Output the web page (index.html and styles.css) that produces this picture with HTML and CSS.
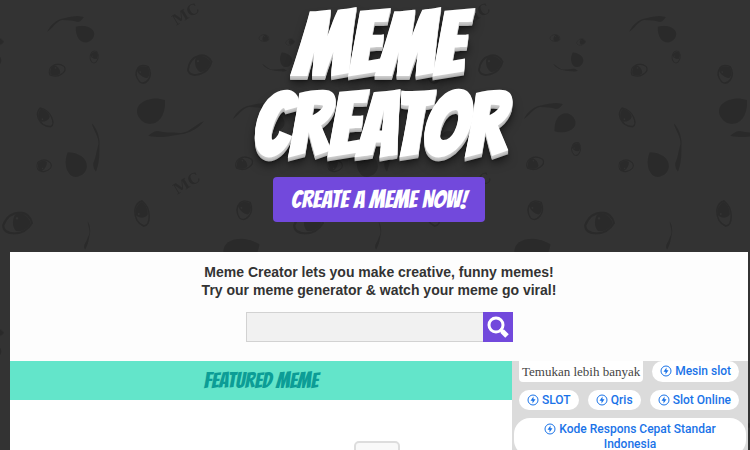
FILE: index.html
```
<!DOCTYPE html>
<html lang="en">
<head>
    <meta charset="UTF-8">
    <meta name="viewport" content="width=device-width, initial-scale=1.0">
    <title>Meme Creator</title>
    <link rel="stylesheet" href="styles.css">
</head>
<body>
    <!-- repeating doodle background -->
    <svg class="doodles" aria-hidden="true">
        <defs>
            <g id="eye">
                <path d="M-12,2 C-9,-6 -4,-9 3,-9 C8,-9 12,-5 13,0 C10,5 5,9 -2,9 C-7,9 -12,8 -12,2Z" fill="none" stroke="#2a2a2a" stroke-width="2"/>
                <path d="M-1,-8 C5,-11 11,-4 12,0 C9,6 3,8 -1,7 C-5,3 -4,-5 -1,-8Z" fill="#2a2a2a"/>
                <circle cx="0" cy="-4" r="1" fill="#333"/>
            </g>
            <path id="nose" d="M14,-11 C6,-14 -6,-13 -12,-6 C-18,2 -10,13 -1,13 C9,13 15,2 14,-11Z" fill="#2a2a2a"/>
            <path id="mouth" d="M0,0 C3,-3 6,-5 10,-5 C18,-3 24,-4 33,-3 C42,-4 48,-12 56,-15 C52,-9 44,-4 36,-2 C26,-1 16,3 0,0Z" fill="#2a2a2a"/>
            <pattern id="faces" width="291" height="291" patternUnits="userSpaceOnUse">
                <use href="#mouth" transform="translate(84 17) rotate(180) scale(.66 1)"/>
                <use href="#nose" transform="translate(85 34) rotate(180) scale(.66 -.66)"/>
                <use href="#eye" transform="translate(94 57) rotate(-65) scale(.48)"/>
                <use href="#eye" transform="translate(57 70) rotate(145) scale(.66 -.66)"/>
                <use href="#eye" transform="translate(143 74) rotate(-55) scale(.7 .85)"/>
                <use href="#eye" transform="translate(199 65) rotate(-15)"/>
                <use href="#nose" transform="translate(151 111)"/>
                <use href="#mouth" transform="translate(148 136)"/>
                <use href="#eye" transform="translate(45 118) rotate(-115) scale(.85 .7)"/>
                <use href="#eye" transform="translate(44 166) rotate(-150) scale(.56 .7)"/>
                <use href="#nose" transform="translate(76 165) rotate(-85) scale(.85)"/>
                <use href="#mouth" transform="translate(96 172) rotate(-80) scale(.85)"/>
                <use href="#eye" transform="translate(142 214) rotate(-90) scale(1 .8)"/>
                <use href="#eye" transform="translate(17 223) scale(1.15)"/>
                <use href="#mouth" transform="translate(85 250) rotate(-70) scale(.5)"/>
                <use href="#eye" transform="translate(264 38) rotate(20) scale(.4)"/>
                <use href="#eye" transform="translate(290 42) scale(.36)"/>
                <use href="#eye" transform="translate(-1 42) scale(.36)"/>
                <use href="#nose" transform="translate(286 60) rotate(-80) scale(.5)"/>
                <use href="#nose" transform="translate(-5 60) rotate(-80) scale(.5)"/>
                <use href="#mouth" transform="translate(287 71) rotate(180) scale(.45 -.5)"/>
                <use href="#mouth" transform="translate(272 104) rotate(180) scale(.7 1)"/>
                <use href="#nose" transform="translate(274 123) rotate(180) scale(.75)"/>
                <use href="#eye" transform="translate(285 149) rotate(-65) scale(.52)"/>
                <use href="#eye" transform="translate(244 163) rotate(145) scale(.7 -.7)"/>
                <use href="#eye" transform="translate(244 210) rotate(-50) scale(.75 .85)"/>
                <use href="#nose" transform="translate(240 253) rotate(15) scale(1.2)"/>
                <text class="doodle-mc" transform="translate(176 26) rotate(-31)">MC</text>
                <text class="doodle-mc" transform="translate(177 195) rotate(-31)">MC</text>
            </pattern>
        </defs>
        <rect width="100%" height="100%" fill="url(#faces)"/>
    </svg>

    <div class="page">
        <header class="header">
            <h1 class="logo">MEME<br>CREATOR</h1>
            <a class="create-button" href="#">CREATE A MEME NOW!</a>
        </header>

        <main class="content">
            <section class="intro">
                <h2>Meme Creator lets you make creative, funny memes!<br>Try our meme generator &amp; watch your meme go viral!</h2>
                <form class="search">
                    <input type="text" aria-label="Search memes">
                    <button type="button" aria-label="Search">
                        <svg viewBox="0 0 30 30">
                            <circle cx="13" cy="13" r="7" fill="none" stroke="#fff" stroke-width="3"/>
                            <path d="M17,17 L20,20" stroke="#fff" stroke-width="3"/>
                            <path d="M19,19 L24,24" stroke="#fff" stroke-width="5"/>
                        </svg>
                    </button>
                </form>
            </section>

            <div class="columns">
                <section class="featured">
                    <h3>FEATURED MEME</h3>
                    <div class="featured-body">
                        <button class="share-button" type="button" aria-label="Share"></button>
                    </div>
                </section>

                <aside class="sidebar">
                    <svg class="symbols" aria-hidden="true">
                        <symbol id="bolt" viewBox="0 0 12 12">
                            <circle cx="6" cy="6" r="5" fill="none" stroke="#1a73e8"/>
                            <path d="M6.500,2.500 L3.500,6.700 H5.500 V9.500 L8.500,5.300 H6.500Z" fill="#1a73e8"/>
                        </symbol>
                    </svg>
                    <div class="chip-row">
                        <span class="more-label">Temukan lebih banyak</span>
                        <a class="chip" href="#"><svg><use href="#bolt"/></svg>Mesin slot</a>
                    </div>
                    <div class="chip-row">
                        <a class="chip" href="#"><svg><use href="#bolt"/></svg>SLOT</a>
                        <a class="chip" href="#"><svg><use href="#bolt"/></svg>Qris</a>
                        <a class="chip" href="#"><svg><use href="#bolt"/></svg>Slot Online</a>
                    </div>
                    <a class="chip chip-wide" href="#"><svg><use href="#bolt"/></svg>Kode Respons Cepat Standar Indonesia</a>
                </aside>
            </div>
        </main>
    </div>
</body>
</html>
```
FILE: styles.css
```
* {
    box-sizing: border-box;
}
body {
    margin: 0;
    height: 100vh;
    overflow: hidden;
    background-color: #333;
    font-family: "Liberation Sans", Arial, sans-serif;
}
.doodles {
    position: absolute;
    top: 0;
    left: 0;
    width: 100%;
    height: 100%;
}
.doodle-mc {
    font: bold 15px "DejaVu Serif", serif;
    fill: #2a2a2a;
}
.page {
    position: relative;
    padding: 0 2px 0 10px;
}
.header {
    display: flex;
    flex-direction: column;
    align-items: center;
    padding-bottom: 30px;
}
.logo {
    margin: 0;
    padding: 4px 0 11px;
    color: #fff;
    font-family: Bangers, "Liberation Sans Narrow", "Liberation Sans", sans-serif;
    font-size: 88px;
    font-weight: bold;
    line-height: 81px;
    text-align: center;
    text-shadow: 0 1px 0 #ccc, 0 2px 0 #c4c4c4, 0 3px 0 #bbb, 0 4px 0 #aaa, 0 5px 2px rgba(0, 0, 0, 0.3), 0 8px 10px rgba(0, 0, 0, 0.5);
}
.create-button {
    padding: 0 18px;
    border-radius: 4px;
    background-color: #7249dc;
    color: #fff;
    font-family: Bangers, "Liberation Sans Narrow", "Liberation Sans", sans-serif;
    font-size: 25px;
    font-weight: normal;
    line-height: 45px;
    text-decoration: none;
}
.content {
    background-color: #fdfdfd;
}
.intro {
    padding: 11px 0 19px;
}
.intro h2 {
    margin: 0 0 13px;
    color: #333;
    font-size: 14px;
    line-height: 18px;
    text-align: center;
}
.search {
    display: flex;
    justify-content: center;
}
.search input {
    width: 237px;
    height: 30px;
    border: 1px solid #d2d2d2;
    border-right: 0;
    background-color: #f1f1f1;
}
.search button {
    width: 30px;
    height: 30px;
    padding: 0;
    border: 0;
    background-color: #7249dc;
}
.search svg {
    display: block;
}
.columns {
    display: grid;
    grid-template-columns: 1fr 236px;
}
.featured {
    background-color: #fff;
}
.featured h3 {
    margin: 0;
    background-color: #63e5ca;
    color: #0c9d96;
    font-family: Bangers, "Liberation Sans Narrow", "Liberation Sans", sans-serif;
    font-size: 22px;
    font-weight: normal;
    line-height: 39px;
    text-align: center;
}
.featured-body {
    display: flex;
    justify-content: flex-end;
    padding: 41px 112px;
}
.share-button {
    width: 46px;
    height: 40px;
    border: 2px solid #ddd;
    border-radius: 5px;
    background-color: #f9f9f9;
}
.sidebar {
    padding: 0 2px;
    background-color: #dbdbdb;
}
.symbols {
    display: none;
}
.chip-row {
    display: flex;
    justify-content: space-between;
    padding: 0 7px 8px 5px;
}
.more-label {
    padding: 0 3px;
    border-radius: 0 0 4px 4px;
    background-color: #fff;
    color: #444;
    font-family: "Liberation Serif", serif;
    font-size: 13px;
    line-height: 21px;
}
.chip {
    padding: 2px 8px;
    border-radius: 16px;
    background-color: #fff;
    color: #1a73e8;
    font-family: Roboto, sans-serif;
    font-size: 12px;
    font-weight: 500;
    line-height: 16px;
    text-decoration: none;
}
.chip svg {
    width: 12px;
    height: 12px;
    margin-right: 3px;
    vertical-align: -2px;
}
.chip-wide {
    display: block;
    padding: 4px 24px;
    line-height: 15px;
    text-align: center;
}
```
